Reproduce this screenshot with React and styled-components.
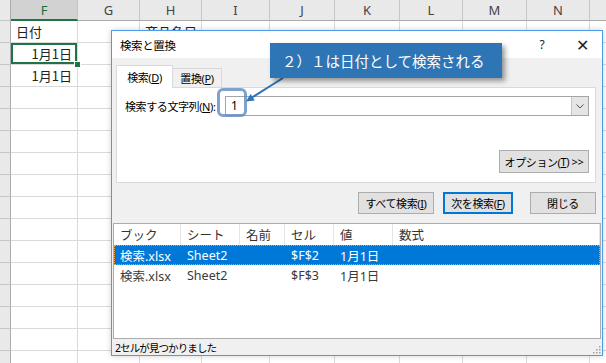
import React from "react";
import styled, { createGlobalStyle } from "styled-components";

const GlobalStyle = createGlobalStyle`
  html, body {
    margin: 0;
    padding: 0;
    background: #fff;
    overflow: hidden;
  }
`;

const UI_FONT = `"Noto Sans", "Noto Sans CJK JP", sans-serif`;

const Stage = styled.div`
  position: relative;
  width: 606px;
  height: 363px;
  overflow: hidden;
  font-family: ${UI_FONT};
`;

/* ---------- spreadsheet behind ---------- */

const Sheet = styled.div`
  display: grid;
  grid-template-columns: 11px 67px 62px 62px 68px 65px 65px 63px 64px 63px 40px;
  grid-template-rows: 21px;
  grid-auto-rows: 22px;
`;

const ColHead = styled.div`
  box-sizing: border-box;
  display: flex;
  align-items: center;
  justify-content: center;
  background: ${(p) => (p.$active ? "#d2d2d2" : "#e9e9e9")};
  color: ${(p) => (p.$active ? "#1e6b3c" : "#444")};
  border-right: 1px solid #c6c6c6;
  border-bottom: ${(p) => (p.$active ? "2px solid #217346" : "1px solid #ababab")};
  font-size: 13px;
`;

const RowHead = styled.div`
  box-sizing: border-box;
  background: #e9e9e9;
  border-right: 1px solid #ababab;
  border-bottom: 1px solid #c6c6c6;
`;

const Cell = styled.div`
  position: relative;
  box-sizing: border-box;
  display: flex;
  align-items: center;
  justify-content: ${(p) => (p.$align === "right" ? "flex-end" : "flex-start")};
  padding: 0 5px;
  border-right: 1px solid #dadada;
  border-bottom: 1px solid #dadada;
  font-family: "Noto Sans CJK JP", sans-serif;
  font-size: 13px;
  color: #222;
  white-space: nowrap;
  box-shadow: ${(p) => (p.$active ? "inset 0 0 0 2px #217346" : "none")};

  &::after {
    content: "";
    display: ${(p) => (p.$active ? "block" : "none")};
    position: absolute;
    right: -4px;
    bottom: -4px;
    width: 5px;
    height: 5px;
    background: #217346;
    border: 1px solid #fff;
    z-index: 1;
  }
`;

const COLS = ["F", "G", "H", "I", "J", "K", "L", "M", "N", ""];
const CELLS = {
  "0-0": { text: "日付" },
  "0-2": { text: "商品名目" },
  "1-0": { text: "1月1日", align: "right", active: true },
  "2-0": { text: "1月1日", align: "right" },
};

function Spreadsheet() {
  const rows = Array.from({ length: 16 }, (_, r) => r);
  return (
    <Sheet>
      <RowHead />
      {COLS.map((c, i) => (
        <ColHead key={c + i} $active={c === "F"}>{c}</ColHead>
      ))}
      {rows.map((r) => (
        <React.Fragment key={r}>
          <RowHead />
          {COLS.map((c, i) => {
            const cell = CELLS[`${r}-${i}`] || {};
            return (
              <Cell key={i} $align={cell.align} $active={cell.active}>
                {cell.text}
              </Cell>
            );
          })}
        </React.Fragment>
      ))}
    </Sheet>
  );
}

/* ---------- find & replace dialog ---------- */

const Dialog = styled.div`
  position: absolute;
  left: 111px;
  top: 30px;
  width: 492px;
  height: 326px;
  box-sizing: border-box;
  border: 1px solid #4d9be6;
  background: #f0f0f0;
  display: flex;
  flex-direction: column;
  font-size: 11px;
  letter-spacing: -0.4px;
  color: #000;
  box-shadow: 0 0 6px rgba(0, 0, 0, 0.18);
  z-index: 1;
`;

const TitleBar = styled.div`
  flex-shrink: 0;
  height: 27px;
  background: #fff;
  display: flex;
  align-items: center;
  padding-left: 8px;
`;

const Title = styled.div`
  flex: 1;
  font-size: 11.5px;
`;

const TitleButton = styled.div`
  width: 40px;
  height: 27px;
  display: flex;
  align-items: center;
  justify-content: center;
  font-size: ${(p) => (p.$big ? "16px" : "12px")};
  color: #222;
`;

const Body = styled.div`
  padding: 7px 6px 0 4px;
`;

const TabRow = styled.div`
  display: flex;
  align-items: flex-end;
  height: 22px;
`;

const Tab = styled.div`
  box-sizing: border-box;
  position: relative;
  width: ${(p) => p.$w}px;
  height: ${(p) => (p.$active ? 23 : 19)}px;
  margin-bottom: ${(p) => (p.$active ? -1 : 0)}px;
  background: ${(p) => (p.$active ? "#fff" : "#f0f0f0")};
  border: 1px solid #d9d9d9;
  border-left: ${(p) => (p.$active ? "1px solid #d9d9d9" : "none")};
  border-bottom: none;
  z-index: ${(p) => (p.$active ? 1 : 0)};
  display: flex;
  align-items: center;
  justify-content: center;
`;

const Panel = styled.div`
  box-sizing: border-box;
  height: 96px;
  background: #fff;
  border: 1px solid #d9d9d9;
  padding: 8px 6px 9px 8px;
  display: flex;
  flex-direction: column;
  justify-content: space-between;
`;

const FieldRow = styled.div`
  display: flex;
  align-items: center;
`;

const Label = styled.div`
  width: 100px;
  flex-shrink: 0;
  white-space: nowrap;
`;

const Combo = styled.div`
  flex: 1;
  box-sizing: border-box;
  height: 20px;
  border: 1px solid #a5a5a5;
  display: flex;
  background: #fff;
`;

const ComboText = styled.div`
  flex: 1;
  padding-left: 5px;
  font-size: 12px;
  line-height: 18px;
`;

const DropButton = styled.div`
  width: 16px;
  background: #e5e5e5;
  border-left: 1px solid #c4c4c4;
  display: flex;
  align-items: center;
  justify-content: center;
`;

const Button = styled.div`
  box-sizing: border-box;
  width: ${(p) => p.$w}px;
  height: ${(p) => p.$h || 22}px;
  margin-left: ${(p) => p.$push || 0}px;
  align-self: ${(p) => (p.$end ? "flex-end" : "auto")};
  background: #e1e1e1;
  border: 1px solid ${(p) => (p.$primary ? "#0078d7" : "#adadad")};
  box-shadow: ${(p) => (p.$primary ? "inset 0 0 0 1px #0078d7" : "none")};
  display: flex;
  align-items: center;
  justify-content: center;
  white-space: pre;
`;

const ButtonRow = styled.div`
  display: flex;
  justify-content: flex-end;
  gap: 9px;
  margin-top: 9px;
`;

const ResultList = styled.div`
  box-sizing: border-box;
  height: 116px;
  margin: 9px 1px 0 1px;
  background: #fff;
  border: 1px solid #acacac;
  font-size: 12.5px;
  letter-spacing: 0;
`;

const ListRow = styled.div`
  display: grid;
  grid-template-columns: 67px 59px 45px 49px 59px 1fr;
  height: ${(p) => (p.$head ? 21 : 20)}px;
  background: ${(p) => (p.$selected ? "#0078d7" : "transparent")};
  color: ${(p) => (p.$selected ? "#fff" : p.$head ? "#333" : "#3a3a3a")};
  outline: ${(p) => (p.$selected ? "1px dotted #e8a050" : "none")};
  outline-offset: -1px;
`;

const ListCell = styled.div`
  box-sizing: border-box;
  padding-left: 6px;
  display: flex;
  align-items: center;
  white-space: nowrap;
  overflow: hidden;
  border-right: ${(p) => (p.$head ? "1px solid #e5e5e5" : "none")};
`;

const StatusBar = styled.div`
  flex: 1;
  position: relative;
  display: flex;
  align-items: center;
  padding-left: 3px;
  font-size: 10.5px;
  letter-spacing: -0.9px;
`;

const Grip = styled.svg`
  position: absolute;
  right: 1px;
  bottom: 1px;
`;

/* ---------- annotation ---------- */

const Callout = styled.div`
  position: absolute;
  left: 270px;
  top: 43px;
  width: 232px;
  height: 35px;
  box-sizing: border-box;
  padding-left: 12px;
  display: flex;
  align-items: center;
  background: #2e75b6;
  color: #fff;
  font-family: "Noto Sans CJK JP", sans-serif;
  font-size: 14.5px;
  box-shadow: 3px 3px 5px rgba(0, 0, 0, 0.4);
  z-index: 3;
`;

const Highlight = styled.div`
  position: absolute;
  left: 217px;
  top: 88px;
  width: 30px;
  height: 29px;
  box-sizing: border-box;
  border: 3px solid rgba(96, 138, 190, 0.8);
  border-radius: 6px;
  z-index: 2;
`;

const Arrow = styled.svg`
  position: absolute;
  left: 240px;
  top: 74px;
  z-index: 3;
`;

const HEADERS = ["ブック", "シート", "名前", "セル", "値", "数式"];
const RESULTS = [
  ["検索.xlsx", "Sheet2", "", "$F$2", "1月1日", ""],
  ["検索.xlsx", "Sheet2", "", "$F$3", "1月1日", ""],
];

function FindDialog() {
  return (
    <Dialog>
      <TitleBar>
        <Title>検索と置換</Title>
        <TitleButton>?</TitleButton>
        <TitleButton $big>✕</TitleButton>
      </TitleBar>
      <Body>
        <TabRow>
          <Tab $w={57} $active>検索(<u>D</u>)</Tab>
          <Tab $w={49}>置換(<u>P</u>)</Tab>
        </TabRow>
        <Panel>
          <FieldRow>
            <Label>検索する文字列(<u>N</u>):</Label>
            <Combo>
              <ComboText>1</ComboText>
              <DropButton>
                <svg width="8" height="5" viewBox="0 0 8 5">
                  <path d="M0.5 0.5 L4 4 L7.5 0.5" fill="none" stroke="#555" strokeWidth="1" />
                </svg>
              </DropButton>
            </Combo>
          </FieldRow>
          <Button $w={90} $h={23} $end>{"オプション("}<u>T</u>{") >>"}</Button>
        </Panel>
        <ButtonRow>
          <Button $w={76}>すべて検索(<u>I</u>)</Button>
          <Button $w={70} $primary>次を検索(<u>F</u>)</Button>
          <Button $w={66} $push={8}>閉じる</Button>
        </ButtonRow>
      </Body>
      <ResultList>
        <ListRow $head>
          {HEADERS.map((h) => (
            <ListCell key={h} $head>{h}</ListCell>
          ))}
        </ListRow>
        {RESULTS.map((row, i) => (
          <ListRow key={i} $selected={i === 0}>
            {row.map((v, j) => (
              <ListCell key={j}>{v}</ListCell>
            ))}
          </ListRow>
        ))}
      </ResultList>
      <StatusBar>
        2セルが見つかりました
        <Grip width="10" height="10" viewBox="0 0 10 10">
          <g fill="#a0a0a0">
            <rect x="8" y="2" width="1.5" height="1.5" />
            <rect x="5" y="5" width="1.5" height="1.5" />
            <rect x="8" y="5" width="1.5" height="1.5" />
            <rect x="2" y="8" width="1.5" height="1.5" />
            <rect x="5" y="8" width="1.5" height="1.5" />
            <rect x="8" y="8" width="1.5" height="1.5" />
          </g>
        </Grip>
      </StatusBar>
    </Dialog>
  );
}

export default function App() {
  return (
    <Stage>
      <GlobalStyle />
      <Spreadsheet />
      <FindDialog />
      <Highlight />
      <Arrow width="50" height="32" viewBox="0 0 50 32">
        <line x1="43" y1="4" x2="12" y2="23.5" stroke="#2e75b6" strokeWidth="2" />
        <polygon points="6,27.5 14.8,26.4 10.6,20" fill="#2e75b6" />
      </Arrow>
      <Callout>２）１は日付として検索される</Callout>
    </Stage>
  );
}
